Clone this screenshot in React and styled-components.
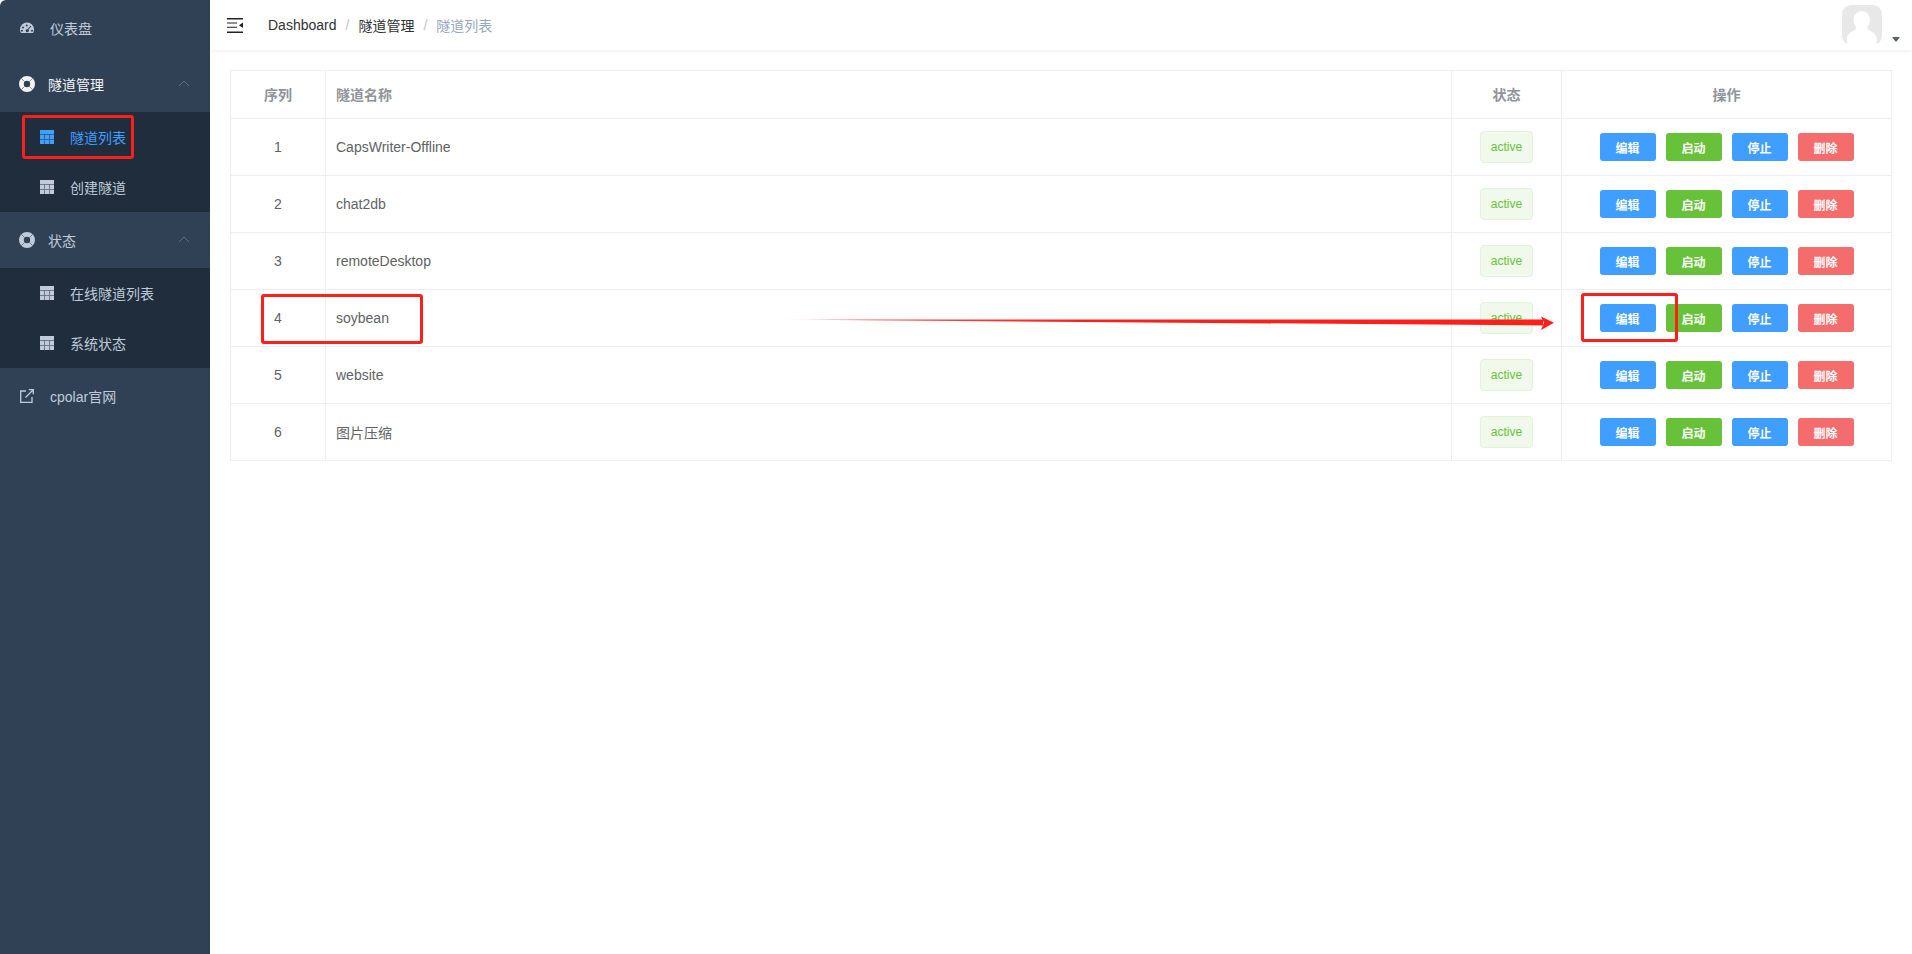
import React from 'react'
import styled, {createGlobalStyle} from 'styled-components'

const GlobalStyle = createGlobalStyle`
    html, body {
        margin: 0;
        padding: 0;
        height: 100%;
        background: #fff;
    }
    #root {
        height: 100%;
    }
    * {
        box-sizing: border-box;
    }
`

const FONT = '"Liberation Sans", Arial, "Noto Sans CJK SC", sans-serif'

const Page = styled.div`
    position: relative;
    display: flex;
    height: 954px;
    width: 1912px;
    overflow: hidden;
    font-family: ${FONT};
    font-size: 14px;
`

const Sidebar = styled.aside`
    width: 210px;
    flex-shrink: 0;
    background: #304156;
    border-top-left-radius: 6px;
`

const MenuRow = styled.div`
    display: flex;
    align-items: center;
    height: 56px;
    padding-left: 20px;
    color: ${p => (p.$bright ? '#f4f4f5' : '#bfcbd9')};
`

const MenuLabel = styled.span`
    margin-left: ${p => p.$gap}px;
`

const Chevron = styled.svg`
    margin-left: auto;
    margin-right: 20px;
    width: 12px;
    height: 12px;
`

const RingSvg = styled.svg`
    width: 16px;
    height: 16px;
    margin-left: -1px;
`

const SubMenu = styled.div`
    background: #1f2d3d;
`

const SubRow = styled.div`
    display: flex;
    align-items: center;
    height: 50px;
    padding-left: 40px;
    color: ${p => (p.$active ? '#409eff' : '#bfcbd9')};
`

const SubLabel = styled.span`
    margin-left: 16px;
`

const Main = styled.main`
    flex: 1;
    min-width: 0;
`

const Header = styled.header`
    display: flex;
    align-items: center;
    height: 50px;
    padding-left: 17px;
    background: #fff;
    box-shadow: 0 1px 4px rgba(0, 21, 41, 0.08);
    position: relative;
`

const Breadcrumb = styled.nav`
    display: flex;
    align-items: center;
    margin-left: 25px;
`

const Crumb = styled.span`
    color: ${p => (p.$last ? '#97a8be' : '#303133')};
`

const Slash = styled.span`
    margin: 0 9px;
    color: #c0c4cc;
`

const AvatarArea = styled.div`
    display: flex;
    align-items: flex-end;
    margin-left: auto;
    height: 40px;
    margin-right: 12px;
    gap: 10px;
`

const Avatar = styled.svg`
    width: 40px;
    height: 40px;
`

const Caret = styled.span`
    width: 0;
    height: 0;
    margin-bottom: 3px;
    border-left: 4px solid transparent;
    border-right: 4px solid transparent;
    border-top: 5px solid #5a5e66;
`

const Content = styled.section`
    padding: 20px 20px 0;
`

const Table = styled.table`
    width: 100%;
    table-layout: fixed;
    border-collapse: collapse;
    border: 1px solid #ebeef5;
`

const Th = styled.th`
    height: 48px;
    padding: 0 10px 2px;
    border: 1px solid #ebeef5;
    color: #909399;
    font-size: 14px;
    font-weight: bold;
    text-align: ${p => p.$align || 'center'};
`

const Td = styled.td`
    height: 57px;
    padding: 0 10px;
    border: 1px solid #ebeef5;
    color: #606266;
    font-size: 14px;
    text-align: ${p => p.$align || 'center'};
`

const Tag = styled.span`
    display: inline-block;
    height: 32px;
    line-height: 30px;
    padding: 0 10px;
    font-size: 12px;
    color: #67c23a;
    background: #f0f9eb;
    border: 1px solid #e1f3d8;
    border-radius: 4px;
`

const Actions = styled.div`
    display: flex;
    justify-content: center;
    gap: 10px;
`

const ActionButton = styled.button`
    width: 56px;
    height: 28px;
    padding: 0;
    border: 0;
    border-radius: 3px;
    font-family: ${FONT};
    font-size: 12px;
    font-weight: bold;
    color: #fff;
    background: ${p => p.$color};
`

// red marks someone drew over the screenshot
const Mark = styled.div`
    position: absolute;
    left: ${p => p.$x}px;
    top: ${p => p.$y}px;
    width: ${p => p.$w}px;
    height: ${p => p.$h}px;
    border: 3px solid #ff1f1a;
    border-radius: 3px;
    pointer-events: none;
`

const ArrowOverlay = styled.svg`
    position: absolute;
    left: 775px;
    top: 310px;
    width: 785px;
    height: 24px;
    pointer-events: none;
`

const GaugeIcon = ({color}) => (
    <svg width="14" height="14" viewBox="0 0 14 14">
        <path
            fill={color}
            fillRule="evenodd"
            d="M7 1.6A6.9 6.9 0 0 0 0 8.5c0 1.4.4 2.6 1 3.5h12c.7-.9 1-2.100 1-3.500a6.900 6.900 0 0 0-7-6.900zM3 5.500a1 1 0 1 1 0 2 1 1 0 0 1 0-2zm3.700-2a1 1 0 1 1 0 2 1 1 0 0 1 0-2zM10.500 4.800l.9.5L8.400 8.700a1.500 1.500 0 1 1-.9-.5l3-3.400zM2 8.800a1 1 0 1 1 0 2 1 1 0 0 1 0-2zm10 0a1 1 0 1 1 0 2 1 1 0 0 1 0-2z"
        />
    </svg>
)

const RingIcon = ({color}) => (
    <RingSvg viewBox="0 0 16 16">
        <circle cx="8" cy="8" r="8" fill={color} />
        <circle cx="8" cy="8" r="3.200" fill="#304156" />
        <path d="M2.300 2.300 5.600 5.600M13.700 2.300 10.400 5.600M2.300 13.700 5.600 10.400M13.700 13.700 10.400 10.400" stroke="#304156" strokeWidth="0.800" opacity="0.7" />
    </RingSvg>
)

const GridIcon = ({color}) => (
    <svg width="14" height="14" viewBox="0 0 14 14">
        <path
            fill={color}
            fillRule="evenodd"
            d="M0 0h14v14H0zM0 4.200v.5h14v-.5zM0 8.900v.5h14v-.5zM4.500 4.700v9.300h.5V4.700zM9 4.700v9.300h.5V4.700z"
        />
    </svg>
)

const LinkIcon = ({color}) => (
    <svg width="14" height="14" viewBox="0 0 14 14" fill="none" stroke={color} strokeWidth="1.300">
        <path d="M6 2H.7v11.300H12V8" />
        <path d="M5.500 8.500 13 1M8.800.7h4.500v4.500" />
    </svg>
)

const Hamburger = () => (
    <svg width="16" height="15" viewBox="0 0 16 15">
        <path fill="#222" d="M0 0h16v1.500H0zM0 4.500h10v1H0zM0 8.800h10v1H0zM0 13.500h16V15H0zM16 4.500v5.500l-4-2.700z" />
    </svg>
)

const Arrow = () => (
    <ArrowOverlay viewBox="0 0 785 24">
        <defs>
            <linearGradient id="fade" x1="0" x2="1" y1="0" y2="0">
                <stop offset="0" stopColor="#ff1f1a" stopOpacity="0" />
                <stop offset="0.12" stopColor="#ff1f1a" stopOpacity="0.8" />
                <stop offset="0.4" stopColor="#ff1f1a" />
            </linearGradient>
        </defs>
        <path d="M0 9.500 768 9.500 768 15.500z" fill="url(#fade)" />
        <path d="M766 6.500 779 12.700 766 20 769 12.700z" fill="#ff1f1a" />
    </ArrowOverlay>
)

const rows = ['CapsWriter-Offline', 'chat2db', 'remoteDesktop', 'soybean', 'website', '图片压缩']

const buttons = [
    {text: '编辑', color: '#409eff'},
    {text: '启动', color: '#67c23a'},
    {text: '停止', color: '#409eff'},
    {text: '删除', color: '#f56c6c'},
]

const Chev = () => (
    <Chevron viewBox="0 0 12 12" fill="none" stroke="#5f6f82" strokeWidth="1">
        <path d="M1 8l5-5 5 5" />
    </Chevron>
)

const App = () => {
    return (
        <Page>
            <GlobalStyle />
            <Sidebar>
                <MenuRow>
                    <GaugeIcon color="#bfcbd9" />
                    <MenuLabel $gap={16}>仪表盘</MenuLabel>
                </MenuRow>
                <MenuRow $bright>
                    <RingIcon color="#f4f4f5" />
                    <MenuLabel $gap={13}>隧道管理</MenuLabel>
                    <Chev />
                </MenuRow>
                <SubMenu>
                    <SubRow $active>
                        <GridIcon color="#409eff" />
                        <SubLabel>隧道列表</SubLabel>
                    </SubRow>
                    <SubRow>
                        <GridIcon color="#bfcbd9" />
                        <SubLabel>创建隧道</SubLabel>
                    </SubRow>
                </SubMenu>
                <MenuRow>
                    <RingIcon color="#bfcbd9" />
                    <MenuLabel $gap={13}>状态</MenuLabel>
                    <Chev />
                </MenuRow>
                <SubMenu>
                    <SubRow>
                        <GridIcon color="#bfcbd9" />
                        <SubLabel>在线隧道列表</SubLabel>
                    </SubRow>
                    <SubRow>
                        <GridIcon color="#bfcbd9" />
                        <SubLabel>系统状态</SubLabel>
                    </SubRow>
                </SubMenu>
                <MenuRow>
                    <LinkIcon color="#bfcbd9" />
                    <MenuLabel $gap={16}>cpolar官网</MenuLabel>
                </MenuRow>
            </Sidebar>
            <Main>
                <Header>
                    <Hamburger />
                    <Breadcrumb>
                        <Crumb>Dashboard</Crumb>
                        <Slash>/</Slash>
                        <Crumb>隧道管理</Crumb>
                        <Slash>/</Slash>
                        <Crumb $last>隧道列表</Crumb>
                    </Breadcrumb>
                    <AvatarArea>
                        <Avatar viewBox="0 0 40 40">
                            <rect width="40" height="40" rx="9" fill="#e8e8e8" />
                            <path
                                fill="#fff"
                                d="M20 6c5 0 8 4 8 9 0 3-1 5-2.500 7-.5 2 1 3 3 4 3 1.500 5 3 6 6v8H5v-8c1-3 3-4.500 6-6 2-1 3.500-2 3-4-1.500-2-2.500-4-2.500-7 0-5 3.500-9 8.500-9z"
                            />
                        </Avatar>
                        <Caret />
                    </AvatarArea>
                </Header>
                <Content>
                    <Table>
                        <colgroup>
                            <col style={{width: 95}} />
                            <col />
                            <col style={{width: 110}} />
                            <col style={{width: 330}} />
                        </colgroup>
                        <thead>
                            <tr>
                                <Th>序列</Th>
                                <Th $align="left">隧道名称</Th>
                                <Th>状态</Th>
                                <Th>操作</Th>
                            </tr>
                        </thead>
                        <tbody>
                            {rows.map((name, i) => (
                                <tr key={name}>
                                    <Td>{i + 1}</Td>
                                    <Td $align="left">{name}</Td>
                                    <Td>
                                        <Tag>active</Tag>
                                    </Td>
                                    <Td>
                                        <Actions>
                                            {buttons.map(b => (
                                                <ActionButton key={b.text} $color={b.color}>
                                                    {b.text}
                                                </ActionButton>
                                            ))}
                                        </Actions>
                                    </Td>
                                </tr>
                            ))}
                        </tbody>
                    </Table>
                </Content>
            </Main>
            <Mark $x={22} $y={115} $w={112} $h={44} />
            <Mark $x={261} $y={294} $w={162} $h={50} />
            <Mark $x={1581} $y={293} $w={97} $h={49} />
            <Arrow />
        </Page>
    )
}

export default App
